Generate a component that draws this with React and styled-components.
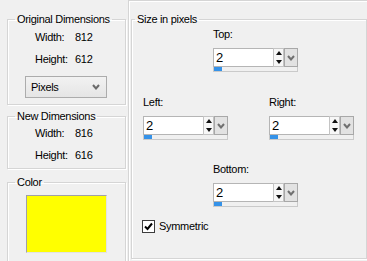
import React from 'react'
import styled, { createGlobalStyle } from 'styled-components'

const Global = createGlobalStyle`
  html, body {
    margin: 0;
    padding: 0;
    background: #f0f0f0;
    overflow: hidden;
  }
  body {
    font-family: "Liberation Sans", Arial, sans-serif;
    font-size: 11px;
    letter-spacing: -0.3px;
    color: #000;
  }
`

const Root = styled.div`
  display: flex;
  width: 367px;
  height: 261px;
  padding-left: 7px;
  box-sizing: border-box;
  overflow: hidden;
`

const LeftCol = styled.div`
  width: 119px;
  display: flex;
  flex-direction: column;
  padding-top: 12px;
`

const Group = styled.fieldset`
  margin: ${p => p.$mt || 0}px 0 0 0;
  padding: 0 0 ${p => p.$pb || 6}px 0;
  border: 1px solid #d5d5d5;
  box-shadow: inset 1px 1px 0 #fff, 1px 1px 0 #fff;
  min-width: 0;
  flex-shrink: 0;
`

const Legend = styled.legend`
  margin-left: ${p => p.$ml ?? 7}px;
  padding: 0 2px;
  line-height: 14px;
  white-space: nowrap;
`

const DimGrid = styled.div`
  display: grid;
  grid-template-columns: 40px auto;
  row-gap: 8px;
  padding: ${p => p.$pt}px 0 0 27px;
  line-height: 14px;
`

const Select = styled.div`
  margin: 10px 0 0 17px;
  width: 82px;
  height: 22px;
  box-sizing: border-box;
  border: 1px solid #acacac;
  background: linear-gradient(#f2f2f2, #e5e5e5);
  display: flex;
  align-items: center;
  justify-content: space-between;
  padding: 0 6px 0 5px;
`

const Swatch = styled.div`
  margin: 6px 0 0 18px;
  width: 81px;
  height: 58px;
  box-sizing: border-box;
  background: #ffff00;
  border-top: 1px solid #a0a0a8;
  border-left: 1px solid #a0a0a8;
  border-right: 1px solid #e3e3e3;
  border-bottom: 1px solid #e3e3e3;
`

const RightPanel = styled.div`
  margin-left: 2px;
  flex: 1;
  border-left: 1px solid #d5d5d5;
  border-top: 1px solid #d5d5d5;
  box-shadow: inset 1px 1px 0 #fff;
  padding: 11px 0 2px 2px;
  display: flex;
`

const SizeGroup = styled(Group)`
  flex: 1;
  margin: 0;
  padding: 1px 0 0 0;
`

const Rows = styled.div`
  display: flex;
  flex-direction: column;
`

const Row = styled.div`
  display: flex;
  gap: 41px;
  padding-left: ${p => p.$pl}px;
  margin-top: ${p => p.$mt}px;
`

const Field = styled.div`
  display: flex;
  flex-direction: column;
`

const Label = styled.div`
  line-height: 14px;
  margin-bottom: 7px;
`

const Spin = styled.div`
  width: 85px;
  display: flex;
  flex-direction: column;
`

const SpinTop = styled.div`
  display: flex;
  height: 19px;
`

const SpinInput = styled.div`
  flex: 1;
  background: #fff;
  border: 1px solid #b5b5b5;
  border-right: none;
  font-size: 13px;
  line-height: 17px;
  padding-left: 2px;
  letter-spacing: 0;
`

const Arrows = styled.div`
  width: 11px;
  display: flex;
  flex-direction: column;
  border: 1px solid #c4c4c4;
  background: #f7f7f7;
  box-sizing: border-box;
`

const ArrowCell = styled.div`
  flex: 1;
  display: flex;
  align-items: center;
  justify-content: center;
  &::after {
    content: '';
    border-left: 3px solid transparent;
    border-right: 3px solid transparent;
    ${p => (p.$down ? 'border-top: 4px solid #111;' : 'border-bottom: 4px solid #111;')}
  }
`

const DropBtn = styled.div`
  width: 14px;
  box-sizing: border-box;
  border: 1px solid #a8a8a8;
  background: #e2e2e2;
  display: flex;
  align-items: center;
  justify-content: center;
`

const Strip = styled.div`
  height: 5px;
  box-sizing: border-box;
  border: 1px solid #cacaca;
  border-top: none;
  background: #f0f0f0;
`

const Fill = styled.div`
  height: 100%;
  background: #3592e8;
`

const CheckRow = styled.label`
  display: flex;
  align-items: center;
  gap: 4px;
  margin: 12px 0 0 10px;
  line-height: 14px;
`

const CheckBox = styled.span`
  width: 13px;
  height: 13px;
  box-sizing: border-box;
  border: 1px solid #3c3c3c;
  background: #fff;
  display: flex;
  align-items: center;
  justify-content: center;
`

const Chevron = ({ color = '#6a6a6a' }) => (
  <svg width="8" height="6" viewBox="0 0 8 6">
    <polyline points="1,1 4,4.5 7,1" fill="none" stroke={color} strokeWidth="2" />
  </svg>
)

const SpinBox = ({ label, value = '2' }) => (
  <Field>
    <Label>{label}</Label>
    <Spin>
      <SpinTop>
        <SpinInput>{value}</SpinInput>
        <Arrows>
          <ArrowCell />
          <ArrowCell $down />
        </Arrows>
        <DropBtn>
          <Chevron color="#707070" />
        </DropBtn>
      </SpinTop>
      <Strip>
        <Fill style={{ width: `${(Number(value) / 20) * 100}%` }} />
      </Strip>
    </Spin>
  </Field>
)

export default function App() {
  return (
    <>
      <Global />
      <Root>
        <LeftCol>
          <Group>
            <Legend>Original Dimensions</Legend>
            <DimGrid $pt={4}>
              <span>Width:</span><span>812</span>
              <span>Height:</span><span>612</span>
            </DimGrid>
            <Select>
              <span>Pixels</span>
              <Chevron />
            </Select>
          </Group>
          <Group $mt={4}>
            <Legend>New Dimensions</Legend>
            <DimGrid $pt={3}>
              <span>Width:</span><span>816</span>
              <span>Height:</span><span>616</span>
            </DimGrid>
          </Group>
          <Group $mt={6} $pb={10}>
            <Legend>Color</Legend>
            <Swatch />
          </Group>
        </LeftCol>
        <RightPanel>
          <SizeGroup>
            <Legend $ml={3}>Size in pixels</Legend>
            <Rows>
              <Row $pl={81} $mt={0}>
                <SpinBox label="Top:" />
              </Row>
              <Row $pl={11} $mt={23}>
                <SpinBox label="Left:" />
                <SpinBox label="Right:" />
              </Row>
              <Row $pl={81} $mt={22}>
                <SpinBox label="Bottom:" />
              </Row>
              <CheckRow>
                <CheckBox>
                  <svg width="9" height="9" viewBox="0 0 9 9">
                    <polyline points="1,4.5 3.5,7 8,1.5" fill="none" stroke="#000" strokeWidth="2" />
                  </svg>
                </CheckBox>
                Symmetric
              </CheckRow>
            </Rows>
          </SizeGroup>
        </RightPanel>
      </Root>
    </>
  )
}
